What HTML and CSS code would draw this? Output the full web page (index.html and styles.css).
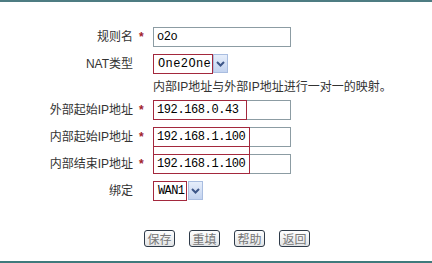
FILE: index.html
```html
<!DOCTYPE html>
<html lang="zh-CN">

<head>
    <meta charset="UTF-8">
    <title>NAT规则</title>
    <link rel="stylesheet" href="styles.css">
</head>

<body>
    <div class="page">
        <div class="form">
            <div class="row">
                <div class="label">规则名</div>
                <div class="star">*</div>
                <div class="input"><span class="val">o2o</span></div>
            </div>
            <div class="row">
                <div class="label">NAT类型</div>
                <div class="star"></div>
                <div class="select">
                    <span class="sel-val sel-nat">One2One</span>
                    <span class="sel-btn"><svg width="9" height="6" viewBox="0 0 9 6"><polyline points="1,1 4.5,4.5 8,1" fill="none" stroke="#3d5688" stroke-width="2"/></svg></span>
                </div>
            </div>
            <div class="row desc">
                <div class="label"></div>
                <div class="star"></div>
                <div class="tip">内部IP地址与外部IP地址进行一对一的映射。</div>
            </div>
            <div class="row">
                <div class="label">外部起始IP地址</div>
                <div class="star">*</div>
                <div class="input"><span class="mark mark-a">192.168.0.43</span></div>
            </div>
            <div class="row">
                <div class="label">内部起始IP地址</div>
                <div class="star">*</div>
                <div class="input"><span class="mark mark-b link">192.168.1.100</span></div>
            </div>
            <div class="row">
                <div class="label">内部结束IP地址</div>
                <div class="star">*</div>
                <div class="input"><span class="mark mark-b">192.168.1.100</span></div>
            </div>
            <div class="row">
                <div class="label">绑定</div>
                <div class="star"></div>
                <div class="select">
                    <span class="sel-val sel-wan">WAN1</span>
                    <span class="sel-btn sel-gap"><svg width="9" height="6" viewBox="0 0 9 6"><polyline points="1,1 4.5,4.5 8,1" fill="none" stroke="#3d5688" stroke-width="2"/></svg></span>
                </div>
            </div>
        </div>
        <div class="actions">
            <button class="btn">保存</button>
            <button class="btn">重填</button>
            <button class="btn">帮助</button>
            <button class="btn">返回</button>
        </div>
        <div class="bottom-line"></div>
    </div>
</body>

</html>
```

FILE: styles.css
```css
* {
    margin: 0;
    padding: 0;
    box-sizing: border-box;
}

body {
    background: #fff;
    font-family: "Liberation Sans", "Noto Sans CJK SC", sans-serif;
    font-size: 12px;
    color: #333;
}

.page {
    width: 432px;
    height: 263px;
    border-top: 2px solid #4d7c82;
}

.form {
    padding-top: 25px;
}

.row {
    display: flex;
    align-items: center;
    height: 20px;
    margin-bottom: 7px;
}

.row.desc {
    height: 12px;
}

.label {
    width: 133px;
    text-align: right;
    line-height: 20px;
    white-space: nowrap;
}

.star {
    width: 20px;
    padding-left: 6px;
    color: #a1202c;
    font-weight: bold;
    line-height: 20px;
}

.tip {
    line-height: 12px;
    white-space: nowrap;
    color: #333;
}

.input {
    display: flex;
    width: 138px;
    height: 20px;
    border: 1px solid #8c9ca3;
    font-family: "Liberation Mono", monospace;
    font-size: 12px;
    letter-spacing: -0.4px;
    color: #000;
}

.val {
    padding-left: 3px;
    line-height: 18px;
}

.mark {
    position: relative;
    margin: -1px 0 -1px -1px;
    height: 20px;
    border: 1px solid #a3283d;
    padding-left: 3px;
    line-height: 18px;
    white-space: nowrap;
}

.mark-a {
    width: 94px;
}

.mark-b {
    width: 97px;
}

/* red annotation joining the two inner ip boxes */
.mark.link::after {
    content: "";
    position: absolute;
    left: -1px;
    right: -1px;
    top: 18px;
    height: 10px;
    border-left: 1px solid #a3283d;
    border-right: 1px solid #a3283d;
}

.select {
    display: flex;
    align-items: flex-start;
    height: 20px;
    font-family: "Liberation Mono", monospace;
    font-size: 12px;
    color: #000;
}

.sel-val {
    height: 20px;
    border: 1px solid #a3283d;
    padding-left: 4px;
    line-height: 18px;
}

.sel-nat {
    width: 60px;
    letter-spacing: 0.4px;
}

.sel-wan {
    width: 34px;
    letter-spacing: -0.6px;
}

.sel-btn {
    display: flex;
    align-items: center;
    justify-content: center;
    width: 15px;
    height: 19px;
    border: 1px solid #a9bde0;
    background: linear-gradient(#e6eefb, #c3d3ef);
}

.sel-gap {
    margin-left: 1px;
}

.actions {
    display: flex;
    gap: 14px;
    padding-left: 144px;
    margin-top: 29px;
}

.btn {
    width: 31px;
    height: 17px;
    border: 1px solid #2e3a48;
    border-radius: 3px;
    background: linear-gradient(#ffffff, #e2e4e6);
    font-family: "Noto Sans CJK SC", sans-serif;
    font-size: 12px;
    line-height: 15px;
    color: #777;
}

.bottom-line {
    margin-top: 14px;
    height: 2px;
    background: #3f7a7c;
}
```
